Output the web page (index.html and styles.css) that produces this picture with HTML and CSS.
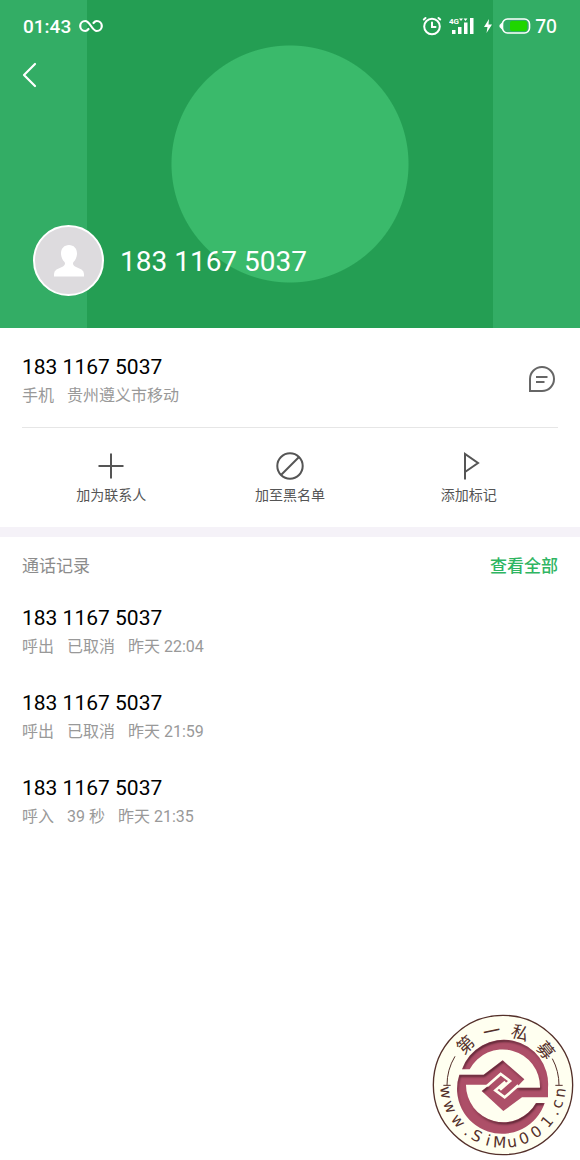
FILE: index.html
```html
<!DOCTYPE html>
<html lang="zh-CN">
<head>
<meta charset="utf-8">
<meta name="viewport" content="width=device-width, initial-scale=1">
<title>183 1167 5037</title>
<link rel="stylesheet" href="styles.css">
</head>
<body>
<div class="screen">
  <header class="hero">
    <div class="status">
      <span class="clock">01:43</span>
      <svg class="infinity" width="24" height="14" viewBox="0 0 24 14" fill="none" stroke="currentColor" stroke-width="2.200" stroke-linecap="round"><path d="M9.500 10C8.500 11.300 7.500 12 6.200 12A5 5 0 0 1 6.200 2C11 2 13 12 17.800 12A5 5 0 0 0 17.800 2C16.500 2 15.500 2.700 14.500 4"/></svg>
      <span class="spacer"></span>
      <svg width="20" height="20" viewBox="0 0 20 20" fill="none" stroke="currentColor" stroke-width="2" stroke-linecap="round"><circle cx="10" cy="10.500" r="7.800"/><path d="M10 6.500V11H13.500"/><path d="M1.800 3.500L3.500 2M18.200 3.500L16.500 2"/></svg>
      <svg class="signal" width="26" height="20" viewBox="0 0 26 20" fill="currentColor"><text class="net" x="0" y="8">4G</text><path d="M10 2.500h4l-2 2.500zM14.500 2.500h4l-2 2.500z"/><path d="M3 14h3.500v4H3zM9 11h3.500v7H9zM15 6.500h3.500V18H15zM21 2h3.500v16H21z"/></svg>
      <svg class="bolt" width="10" height="16" viewBox="0 0 10 16" fill="currentColor"><path d="M6 1L1 9h3.500L3.500 15L9 6.500H5.500z"/></svg>
      <svg class="battery" width="32" height="18" viewBox="0 0 32 18"><rect x="3.500" y="2" width="27" height="14" rx="5" fill="none" stroke="currentColor" stroke-width="1.600"/><path d="M3 5.500L.5 8v2L3 12.500z" fill="currentColor"/><rect x="11" y="4" width="17" height="10" rx="2" fill="#1fd600"/></svg>
      <span class="level">70</span>
    </div>
    <button class="back" type="button" aria-label="返回">
      <svg width="16" height="26" viewBox="0 0 16 26" fill="none" stroke="currentColor" stroke-width="2.200" stroke-linecap="round" stroke-linejoin="round"><path d="M13 2L2 13L13 24"/></svg>
    </button>
    <div class="identity">
      <span class="avatar">
        <svg width="32" height="34" viewBox="0 0 32 34" fill="#fff"><path d="M16 1C20.800 1 24 4.500 24 9.500C24 13 22.500 16 20.500 18C19.500 19.500 20 21.500 22 22.500L28.500 25.500Q31 27 31 30V32.500H1V30Q1 27 3.500 25.500L10 22.500C12 21.500 12.500 19.500 11.500 18C9.500 16 8 13 8 9.500C8 4.500 11.200 1 16 1Z"/></svg>
      </span>
      <h1 class="title">183 1167 5037</h1>
    </div>
  </header>

  <main>
    <section class="contact">
      <div class="info">
        <div>
          <p class="number">183 1167 5037</p>
          <p class="meta"><span>手机</span><span>贵州遵义市移动</span></p>
        </div>
        <button class="message" type="button" aria-label="发送短信">
          <svg width="28" height="28" viewBox="0 0 28 28" fill="none" stroke="currentColor" stroke-width="2"><path d="M2 26V14A12 12 0 1 1 14 26Z"/><path d="M8 12H19.500M8 17H16.500"/></svg>
        </button>
      </div>
      <div class="actions">
        <button class="action" type="button">
          <svg width="28" height="28" viewBox="0 0 28 28" fill="none" stroke="currentColor" stroke-width="2"><path d="M14 1.500V26.500M1.500 14H26.500"/></svg>
          加为联系人
        </button>
        <button class="action" type="button">
          <svg width="28" height="28" viewBox="0 0 28 28" fill="none" stroke="currentColor" stroke-width="2"><circle cx="14" cy="14" r="12.700"/><path d="M5 23L23 5"/></svg>
          加至黑名单
        </button>
        <button class="action" type="button">
          <svg width="28" height="28" viewBox="0 0 28 28" fill="none" stroke="currentColor" stroke-width="2"><path d="M10 27.500V2L23 11L10 20"/></svg>
          添加标记
        </button>
      </div>
    </section>

    <section class="log">
      <div class="log-head">
        <h2>通话记录</h2>
        <a href="#all">查看全部</a>
      </div>
      <ul class="calls">
        <li><p class="number">183 1167 5037</p><p class="meta"><span>呼出</span><span>已取消</span><span>昨天 22:04</span></p></li>
        <li><p class="number">183 1167 5037</p><p class="meta"><span>呼出</span><span>已取消</span><span>昨天 21:59</span></p></li>
        <li><p class="number">183 1167 5037</p><p class="meta"><span>呼入</span><span>39 秒</span><span>昨天 21:35</span></p></li>
      </ul>
    </section>
  </main>

  <svg class="seal" width="142" height="142" viewBox="22 26 426 426">
    <defs>
      <path id="arc-top" d="M89 239A146 146 0 0 1 381 239"/>
      <path id="arc-bottom" d="M47 239A188 188 0 0 0 423 239"/>
      <filter id="inset" x="-10%" y="-10%" width="120%" height="120%">
        <feOffset in="SourceAlpha" dx="3" dy="6" result="o"/>
        <feComposite in="SourceAlpha" in2="o" operator="out" result="edge"/>
        <feGaussianBlur in="edge" stdDeviation="3" result="b"/>
        <feComposite in="b" in2="SourceAlpha" operator="in" result="shade"/>
        <feMerge><feMergeNode in="SourceGraphic"/><feMergeNode in="shade"/></feMerge>
      </filter>
    </defs>
    <circle cx="235" cy="239" r="209" fill="#fffff0" stroke="#54302a" stroke-width="4"/>
    <path d="M67 240A168 168 0 0 1 91 153M403 240A168 168 0 0 0 383 160" fill="none" stroke="#54302a" stroke-width="3"/>
    <path d="M56 240H78M392 240H414" stroke="#54302a" stroke-width="3"/>
    <g fill="#ad5068" filter="url(#inset)">
      <path d="M112 192A133 133 0 0 1 370 247V276H292L236 317L171 257L195 238H124A112 112 0 0 0 334 293H360A134 134 0 0 1 104 208H177L234 165L299 222L275 247H346A112 112 0 0 0 135 192Z"/>
    </g>
    <path d="M187 242L228 206L256 227L226 253M281 240L240 276L212 255L242 229" fill="none" stroke="#fffff0" stroke-width="8"/>
    <text class="seal-cn"><textPath href="#arc-top"><tspan x="120">第</tspan><tspan x="199">一</tspan><tspan x="276">私</tspan><tspan x="359">募</tspan></textPath></text>
    <text class="seal-url"><textPath href="#arc-bottom"><tspan x="25 73 127 173 206 246 284 325 366 411 460 499 528 565">www.SiMu001.cn</tspan></textPath></text>
  </svg>
</div>
</body>
</html>
```
FILE: styles.css
```css
* { box-sizing: border-box; }

body {
  margin: 0;
  background: #fff;
  color: #000;
  font-family: Roboto, "Noto Sans CJK SC", sans-serif;
}

h1, h2, p, ul { margin: 0; padding: 0; font-weight: 400; }
ul { list-style: none; }
svg { display: block; flex: none; }

button {
  margin: 0;
  padding: 0;
  border: 0;
  background: none;
  color: inherit;
  font: inherit;
  cursor: pointer;
}

.screen {
  position: relative;
  min-height: 100vh;
}

.hero {
  display: flex;
  flex-direction: column;
  align-items: stretch;
  padding-bottom: 32px;
  color: #fff;
  background:
    radial-gradient(circle at 50% 164px, #3aba6b 118px, transparent 119px),
    linear-gradient(90deg, #33ad65 15%, #249e53 15% 85%, #33ad65 85%);
}

.status {
  display: flex;
  align-items: center;
  height: 52px;
  padding: 0 23px;
}

.clock { font-size: 19px; font-weight: 500; }
.infinity { margin-left: 8px; }
.spacer { flex: 1; }
.signal { margin-left: 7px; }
.net { font: 700 8px Roboto, sans-serif; }
.bolt { margin-left: 8px; }
.battery { margin-left: 6px; }
.level { margin-left: 4px; font: 500 19px "Noto Sans", sans-serif; }

.back {
  align-self: flex-start;
  padding: 10px 22px;
}

.identity {
  display: flex;
  align-items: center;
  gap: 16px;
  margin-top: 127px;
  padding: 0 33px;
}

.avatar {
  display: flex;
  align-items: center;
  justify-content: center;
  width: 71px;
  height: 71px;
  border: 2px solid #fff;
  border-radius: 50%;
  background: #dddbde;
}

.title { padding-top: 2px; font-size: 28px; line-height: 36px; }

.contact { border-bottom: 10px solid #f5f2f8; }

.info {
  display: flex;
  align-items: center;
  justify-content: space-between;
  margin: 0 22px;
  padding: 25px 0 16px;
  border-bottom: 1px solid #e6e6e6;
}

.number { font-size: 21px; line-height: 28px; }

.meta {
  display: flex;
  gap: 13px;
  color: #999;
  font-size: 16px;
  line-height: 30px;
}

.message { padding: 0 2px 6px; color: #666; }

.actions {
  display: grid;
  grid-template-columns: repeat(3, 1fr);
  padding: 24px 22px 22px;
}

.action {
  display: flex;
  flex-direction: column;
  align-items: center;
  gap: 5px;
  color: #555;
  font-size: 14px;
  line-height: 20px;
}

.log { padding: 17px 22px; }

.log-head {
  display: flex;
  justify-content: space-between;
  margin-bottom: 26px;
  font-size: 17px;
  line-height: 24px;
}

.log-head h2 { color: #8c8c8c; font-size: 17px; }
.log-head a { color: #2fb562; font-weight: 500; text-decoration: none; }

.calls {
  display: flex;
  flex-direction: column;
  gap: 27px;
}

.seal {
  position: absolute;
  right: 6px;
  bottom: 4px;
}

.seal-cn {
  fill: #54302a;
  font: 52px "Noto Sans CJK SC", sans-serif;
  text-anchor: middle;
}

.seal-url {
  fill: #54302a;
  font: 46px "DejaVu Sans", sans-serif;
  text-anchor: middle;
}
```
